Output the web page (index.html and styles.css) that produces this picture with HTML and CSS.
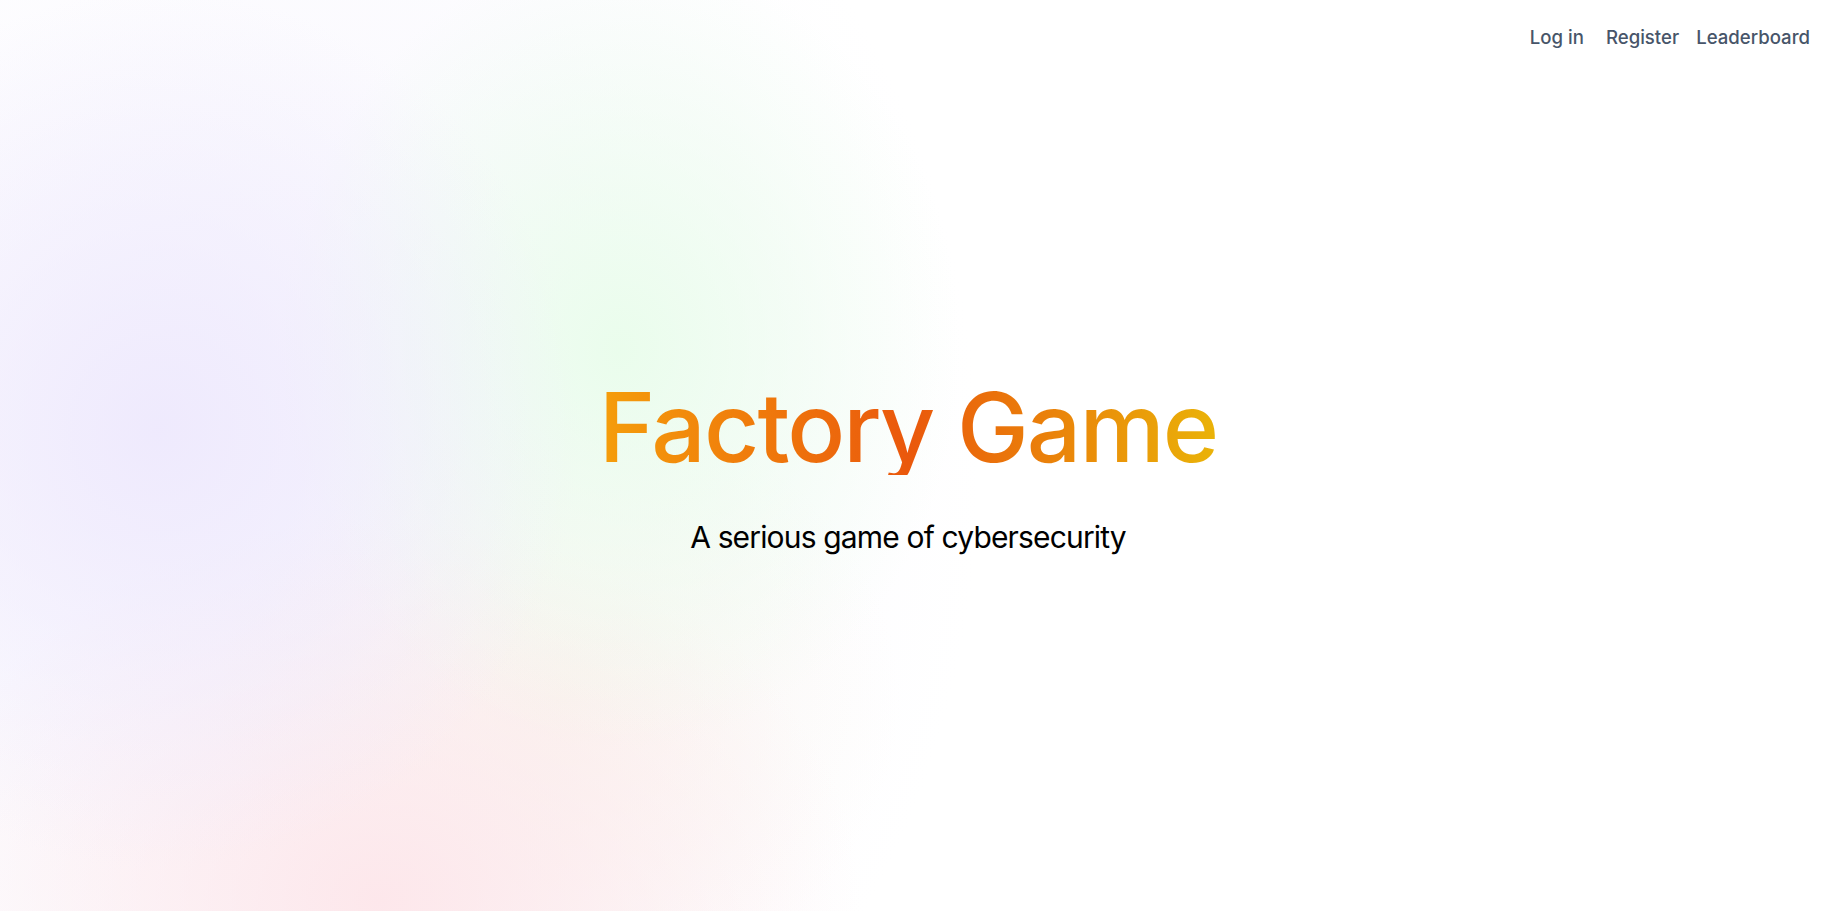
FILE: index.html
```html
<!DOCTYPE html>
<html lang="en">
<head>
<meta charset="utf-8">
<title>Factory Game</title>
<link rel="stylesheet" href="styles.css">
</head>
<body>
<div class="page">
  <header class="topbar">
    <nav class="nav">
      <a class="nav-link nav-login" href="#">Log in</a>
      <a class="nav-link nav-register" href="#">Register</a>
      <a class="nav-link" href="#">Leaderboard</a>
    </nav>
  </header>
  <main class="hero">
    <h1 class="title">Factory Game</h1>
    <p class="subtitle">A serious game of cybersecurity</p>
  </main>
</div>
</body>
</html>
```
FILE: styles.css
```css
html, body {
  margin: 0;
  padding: 0;
  height: 100%;
}
body {
  font-family: Inter, "Noto Sans", "Liberation Sans", sans-serif;
  color: #000;
  background-color: #fff;
  background-image:
    radial-gradient(ellipse 420px 440px at 160px 430px, rgba(238, 233, 253, 0.95), rgba(238, 233, 253, 0) 100%),
    radial-gradient(ellipse 340px 400px at 620px 350px, rgba(233, 253, 235, 0.95), rgba(233, 253, 235, 0) 100%),
    radial-gradient(ellipse 480px 380px at 380px 900px, rgba(253, 230, 234, 0.95), rgba(253, 230, 234, 0) 100%),
    radial-gradient(ellipse 340px 300px at 560px 700px, rgba(250, 244, 236, 0.8), rgba(250, 244, 236, 0) 100%),
    radial-gradient(ellipse 680px 800px at 300px 470px, rgba(245, 243, 253, 0.8), rgba(245, 243, 253, 0) 100%);
  background-repeat: no-repeat;
}
.page {
  min-height: 100%;
  display: flex;
  flex-direction: column;
}
.topbar {
  display: flex;
  justify-content: flex-end;
  padding: 23px 38px 0 0;
}
.nav {
  display: flex;
  align-items: center;
  gap: 17px;
}
.nav-login {
  margin-right: 5px;
}
.nav-link {
  font-size: 18.6px;
  line-height: 28px;
  font-weight: 500;
  color: #475569;
  text-decoration: none;
}
.hero {
  display: flex;
  flex-direction: column;
  align-items: center;
  padding: 328px 32px 0 0;
}
.title {
  margin: 0;
  font-size: 96px;
  line-height: 96px;
  font-weight: 500;
  letter-spacing: -0.02em;
  background-image: linear-gradient(90deg, #f59e0b 0%, #ea580c 50%, #eab308 100%);
  -webkit-background-clip: text;
  background-clip: text;
  color: transparent;
}
.subtitle {
  margin: 44px 0 0;
  font-size: 30px;
  line-height: 36px;
  font-weight: 400;
  letter-spacing: -0.028em;
  color: #000;
}
```
